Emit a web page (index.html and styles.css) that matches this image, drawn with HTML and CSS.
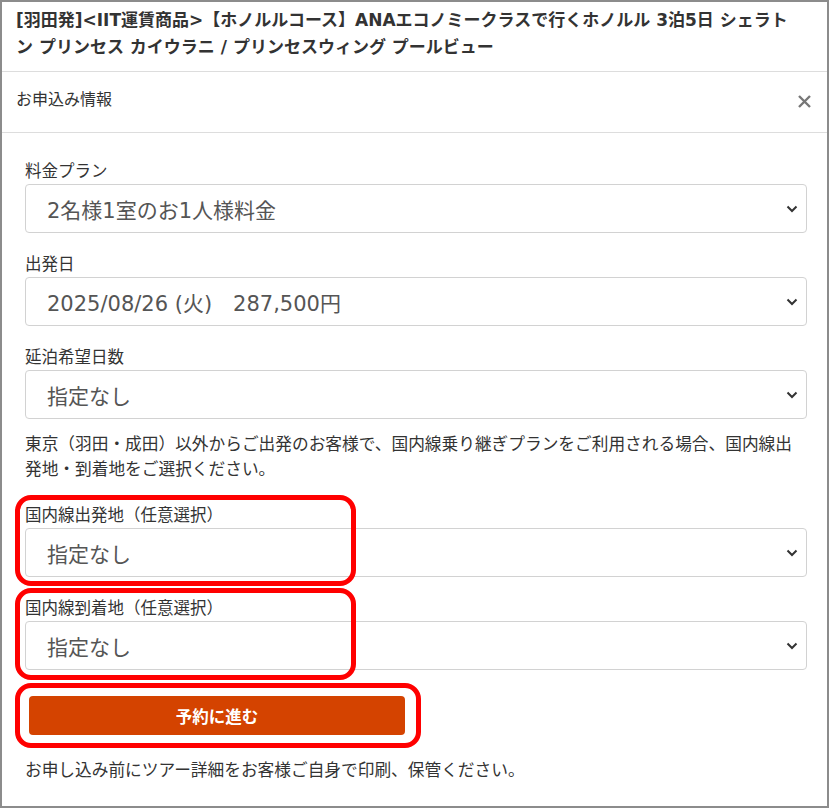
FILE: index.html
```html
<!DOCTYPE html>
<html lang="ja">
<head>
<meta charset="utf-8">
<title>お申込み情報</title>
<link rel="stylesheet" href="styles.css">
</head>
<body>
<div class="modal">
  <div class="tour-head">
    <h1 class="tour-title">[羽田発]&lt;IIT運賃商品&gt;【ホノルルコース】ANAエコノミークラスで行くホノルル 3泊5日 シェラトン プリンセス カイウラニ / プリンセスウィング プールビュー</h1>
  </div>
  <div class="sub-head">
    <span class="sub-title">お申込み情報</span>
    <svg class="close" width="15" height="15" viewBox="0 0 15 15"><path d="M2 2L13 13M13 2L2 13" stroke="#777" stroke-width="2.4" fill="none"/></svg>
  </div>
  <div class="form-body">
    <div class="field">
      <div class="label">料金プラン</div>
      <div class="select"><span>2名様1室のお1人様料金</span><svg class="chev" width="12" height="8" viewBox="0 0 12 8"><path d="M1.5 1.5L6 6L10.5 1.5" stroke="#333" stroke-width="2" fill="none"/></svg></div>
    </div>
    <div class="field">
      <div class="label">出発日</div>
      <div class="select"><span>2025/08/26 (火)　287,500円</span><svg class="chev" width="12" height="8" viewBox="0 0 12 8"><path d="M1.5 1.5L6 6L10.5 1.5" stroke="#333" stroke-width="2" fill="none"/></svg></div>
    </div>
    <div class="field">
      <div class="label">延泊希望日数</div>
      <div class="select"><span>指定なし</span><svg class="chev" width="12" height="8" viewBox="0 0 12 8"><path d="M1.5 1.5L6 6L10.5 1.5" stroke="#333" stroke-width="2" fill="none"/></svg></div>
    </div>
    <p class="note">東京（羽田・成田）以外からご出発のお客様で、国内線乗り継ぎプランをご利用される場合、国内線出発地・到着地をご選択ください。</p>
    <div class="field">
      <div class="label">国内線出発地（任意選択）</div>
      <div class="select"><span>指定なし</span><svg class="chev" width="12" height="8" viewBox="0 0 12 8"><path d="M1.5 1.5L6 6L10.5 1.5" stroke="#333" stroke-width="2" fill="none"/></svg></div>
    </div>
    <div class="field">
      <div class="label">国内線到着地（任意選択）</div>
      <div class="select"><span>指定なし</span><svg class="chev" width="12" height="8" viewBox="0 0 12 8"><path d="M1.5 1.5L6 6L10.5 1.5" stroke="#333" stroke-width="2" fill="none"/></svg></div>
    </div>
    <div class="btn-row">
      <button class="btn-reserve">予約に進む</button>
    </div>
    <p class="footnote">お申し込み前にツアー詳細をお客様ご自身で印刷、保管ください。</p>
  </div>
  <div class="mark mark-1"></div>
  <div class="mark mark-2"></div>
  <div class="mark mark-3"></div>
</div>
</body>
</html>
```
FILE: styles.css
```css
* { box-sizing: border-box; }
html, body { margin: 0; padding: 0; background: #fff; }
body {
  font-family: "DejaVu Sans", "Noto Sans CJK JP", sans-serif;
  color: #333;
}
.modal {
  position: relative;
  width: 829px;
  height: 808px;
  border: 2px solid #8c8c8c;
  overflow: hidden;
}
.tour-head {
  padding: 5px 26px 10px 14px;
  border-bottom: 1px solid #ddd;
}
.tour-title {
  margin: 0;
  font-size: 17px;
  font-weight: bold;
  line-height: 27px;
  color: #333;
}
.sub-head {
  height: 61px;
  padding: 0 15px 4px 14px;
  border-bottom: 1px solid #ddd;
  display: flex;
  align-items: center;
  justify-content: space-between;
}
.sub-title {
  font-size: 16px;
  line-height: 24px;
  color: #333;
}
.close { display: block; margin-top: 2px; }
.form-body {
  padding: 27px 20px 0 23px;
}
.field { margin-bottom: 20px; }
.label {
  font-size: 16.5px;
  line-height: 24px;
  color: #333;
}
.select {
  height: 49px;
  border: 1px solid #d2d2d2;
  border-radius: 4px;
  display: flex;
  align-items: center;
  justify-content: space-between;
  padding: 0 8px 0 21px;
  font-size: 21px;
  color: #555;
}
.chev { display: block; }
.note {
  margin: -7px 0 22px;
  font-size: 16.7px;
  line-height: 25px;
  color: #333;
}
.btn-row {
  padding: 6px 0 0 4px;
  margin-bottom: 23px;
}
.btn-reserve {
  display: block;
  width: 376px;
  height: 39px;
  border: 0;
  border-radius: 4px;
  background: #d44300;
  color: #fff;
  font-family: inherit;
  font-size: 16.5px;
  font-weight: bold;
  padding: 0;
}
.footnote {
  margin: 0;
  font-size: 16.7px;
  line-height: 25px;
  color: #333;
}
.mark {
  position: absolute;
  border: 5px solid #f00;
  border-radius: 16px;
  pointer-events: none;
}
.mark-1 { left: 13px; top: 493px; width: 341px; height: 91px; }
.mark-2 { left: 13px; top: 586px; width: 341px; height: 92px; }
.mark-3 { left: 13px; top: 681px; width: 406px; height: 65px; }
```
